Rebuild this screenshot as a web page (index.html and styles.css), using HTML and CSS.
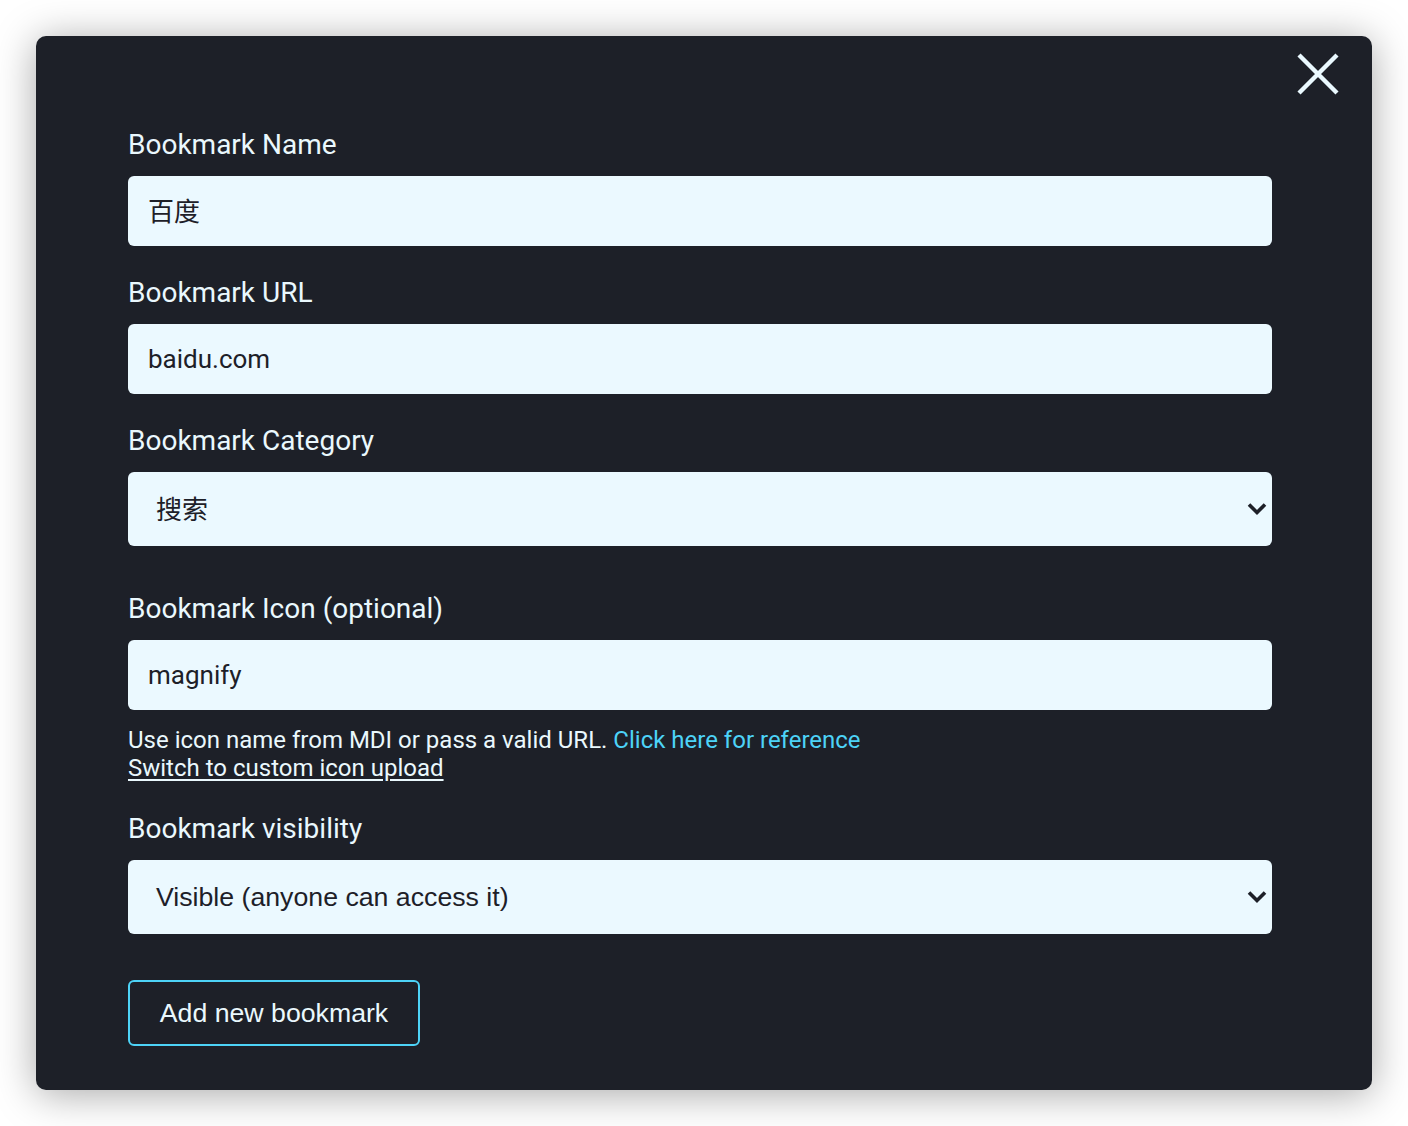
FILE: index.html
```html
<!DOCTYPE html>
<html>
<head>
<meta charset="utf-8">
<link rel="stylesheet" href="styles.css">
</head>
<body>
<div class="modal">
  <button class="close" aria-label="close">
    <svg width="42" height="42" viewBox="0 0 42 42"><path d="M2 2 L40 40 M40 2 L2 40" stroke="#eaf9ff" stroke-width="4.4" stroke-linecap="butt" fill="none"/></svg>
  </button>
  <form class="form">
    <div class="group">
      <label class="label">Bookmark Name</label>
      <div class="input cjk"><span class="cjk-text">百度</span></div>
    </div>
    <div class="group">
      <label class="label">Bookmark URL</label>
      <div class="input">baidu.com</div>
    </div>
    <div class="group group-select">
      <label class="label">Bookmark Category</label>
      <div class="select cjk"><span class="cjk-text">搜索</span>
        <svg class="chev" width="20" height="14" viewBox="0 0 20 14"><path d="M2 2.5 L10 10.5 L18 2.5" stroke="#1d2028" stroke-width="3.6" fill="none"/></svg>
      </div>
    </div>
    <div class="group">
      <label class="label">Bookmark Icon (optional)</label>
      <div class="input">magnify</div>
      <div class="help">Use icon name from MDI or pass a valid URL. <span class="link">Click here for reference</span><br><span class="under">Switch to custom icon upload</span></div>
    </div>
    <div class="group group-select">
      <label class="label">Bookmark visibility</label>
      <div class="select"><span>Visible (anyone can access it)</span>
        <svg class="chev" width="20" height="14" viewBox="0 0 20 14"><path d="M2 2.5 L10 10.5 L18 2.5" stroke="#1d2028" stroke-width="3.6" fill="none"/></svg>
      </div>
    </div>
    <div class="actions">
      <button type="button" class="btn">Add new bookmark</button>
    </div>
  </form>
</div>
</body>
</html>
```
FILE: styles.css
```css
html, body { margin: 0; padding: 0; background: #ffffff; }
body { padding: 36px; width: 1336px; }
.modal {
  position: relative;
  width: 1336px;
  height: 1054px;
  box-sizing: border-box;
  background: #1d2028;
  border-radius: 10px;
  box-shadow: 0 4px 40px rgba(0,0,0,0.35);
  padding: 93px 100px 0 92px;
  font-family: Roboto, "Noto Sans CJK SC", sans-serif;
  color: #eaf8fd;
}
.close {
  position: absolute;
  top: 17px;
  right: 33px;
  background: none;
  border: 0;
  padding: 0;
  width: 42px;
  height: 42px;
}
.close svg { display: block; }
.form { display: flex; flex-direction: column; }
.group { display: flex; flex-direction: column; margin-bottom: 31px; }
.group-select { margin-bottom: 47px; }
.label { font-size: 28px; line-height: 30px; padding-top: 1px; margin-bottom: 16px; }
.input {
  height: 70px;
  box-sizing: border-box;
  background: #ebf9ff;
  border-radius: 6px;
  padding: 0 20px;
  display: flex;
  align-items: center;
  color: #1d2028;
  font-size: 26px;
}
.cjk { font-family: Roboto, "Noto Sans CJK SC", sans-serif; }
.cjk-text { position: relative; top: -2px; }
.select {
  height: 74px;
  box-sizing: border-box;
  background: #ebf9ff;
  border-radius: 6px;
  padding: 0 5px 0 28px;
  display: flex;
  align-items: center;
  justify-content: space-between;
  color: #1d2028;
  font-family: "Liberation Sans", Arial, "Noto Sans CJK SC", sans-serif;
  font-size: 26.7px;
}
.select.cjk { font-family: "Noto Sans CJK SC", sans-serif; font-size: 26px; }
.chev { display: block; }
.help { font-size: 24px; line-height: 28px; margin-top: 16px; color: #eaf8fd; }
.link { color: #4dd3f7; }
.under { text-decoration: underline; text-underline-offset: 3px; }
.actions { margin-top: -1px; }
.btn {
  width: 292px;
  height: 66px;
  background: transparent;
  border: 2px solid #4dd3f7;
  border-radius: 6px;
  color: #eaf8fd;
  font-family: "Liberation Sans", Arial, sans-serif;
  font-size: 26.7px;
  padding: 0;
}
```
